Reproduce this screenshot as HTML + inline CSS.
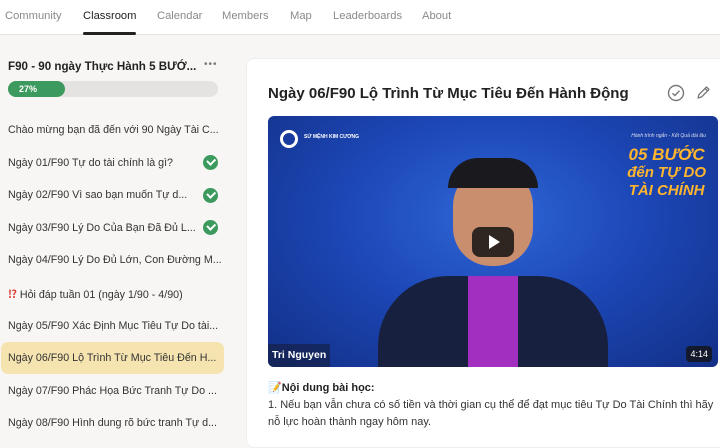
<!DOCTYPE html>
<html><head><meta charset="utf-8"><style>
*{margin:0;padding:0;box-sizing:border-box}
body{width:720px;height:434px;overflow:hidden;background:#f7f6f4;font-family:"Liberation Sans","Noto Sans CJK SC",sans-serif;color:#2a2a2a;position:relative}
.nav{position:absolute;left:0;top:0;width:720px;height:35px;background:#fff;border-bottom:1px solid #e6e4e0}
.nav span{position:absolute;top:10px;font-size:11.2px;color:#8a8a8a}
.nav .act{color:#222}
.ul{position:absolute;left:83px;top:32px;width:53px;height:3px;background:#222;border-radius:2px}
.side div{position:absolute;left:8px;font-size:10.7px;color:#333;white-space:nowrap}
.chk{position:absolute;left:203px;width:15px;height:15px;border-radius:50%;background:#3c9a5f}
.chk:after{content:"";position:absolute;left:4px;top:3px;width:6px;height:3.5px;border-left:2px solid #fff;border-bottom:2px solid #fff;transform:rotate(-45deg)}
.card{position:absolute;left:246px;top:58px;width:480px;height:390px;background:#fff;border-radius:8px;border:1px solid #eee}
</style></head><body>
<div class="nav">
<span style="left:5px">Community</span>
<span class="act" style="left:83px">Classroom</span>
<span style="left:157px">Calendar</span>
<span style="left:222px">Members</span>
<span style="left:290px">Map</span>
<span style="left:333px">Leaderboards</span>
<span style="left:422px">About</span>
<div class="ul"></div>
</div>
<div style="position:absolute;left:8px;top:60px;font-size:11.6px;font-weight:bold;color:#222">F90 - 90 ngày Thực Hành 5 BƯỚ...</div>
<div style="position:absolute;left:204px;top:59px;font-size:10px;color:#777;letter-spacing:1px">•••</div>
<div style="position:absolute;left:8px;top:81px;width:210px;height:16px;background:#e4e3e1;border-radius:8px"></div>
<div style="position:absolute;left:8px;top:81px;width:57px;height:16px;background:#3d9a5e;border-radius:8px;color:#fff;font-size:9px;font-weight:bold;padding:3px 0 0 11px">27%</div>
<div style="position:absolute;left:1px;top:342px;width:223px;height:32px;background:#f6e4b0;border-radius:7px"></div>
<div class="side">
<div style="top:124px">Chào mừng bạn đã đến với 90 Ngày Tài C...</div>
<div style="top:157px">Ngày 01/F90 Tự do tài chính là gì?</div>
<div style="top:189px">Ngày 02/F90 Vì sao bạn muốn Tự d...</div>
<div style="top:222px">Ngày 03/F90 Lý Do Của Bạn Đã Đủ L...</div>
<div style="top:254px">Ngày 04/F90 Lý Do Đủ Lớn, Con Đường M...</div>
<div style="top:287px"><span style="color:#d9342b;font-weight:bold">⁉</span> Hỏi đáp tuần 01 (ngày 1/90 - 4/90)</div>
<div style="top:320px">Ngày 05/F90 Xác Định Mục Tiêu Tự Do tài...</div>
<div style="top:352px">Ngày 06/F90 Lộ Trình Từ Mục Tiêu Đến H...</div>
<div style="top:385px">Ngày 07/F90 Phác Họa Bức Tranh Tự Do ...</div>
<div style="top:417px">Ngày 08/F90 Hình dung rõ bức tranh Tự d...</div>
</div>
<div class="chk" style="top:155px"></div>
<div class="chk" style="top:188px"></div>
<div class="chk" style="top:220px"></div>
<div class="card"></div>
<div style="position:absolute;left:268px;top:85px;font-size:15px;font-weight:bold;color:#222">Ngày 06/F90 Lộ Trình Từ Mục Tiêu Đến Hành Động</div>
<svg style="position:absolute;left:667px;top:84px" width="18" height="18" viewBox="0 0 18 18"><circle cx="9" cy="9" r="7.5" fill="none" stroke="#777" stroke-width="1.4"/><path d="M5.5 9.2l2.4 2.3 4.6-4.8" fill="none" stroke="#777" stroke-width="1.4"/></svg>
<svg style="position:absolute;left:695px;top:85px" width="16" height="16" viewBox="0 0 16 16"><path d="M3 13l1-3.5L11.5 2 14 4.5 6.5 12z M10 3.5l2.5 2.5" fill="none" stroke="#777" stroke-width="1.3" stroke-linejoin="round"/></svg>
<div style="position:absolute;left:268px;top:116px;width:450px;height:251px;border-radius:6px;overflow:hidden;background:radial-gradient(ellipse at 50% 40%,#2f66d6 0%,#1d48b8 45%,#122f86 100%)">
 <div style="position:absolute;left:12px;top:14px;width:18px;height:18px;border-radius:50%;border:3px solid #fff"></div>
 <div style="position:absolute;left:36px;top:18px;font-size:5px;color:#fff;font-weight:bold">SỨ MỆNH KIM CƯƠNG</div>
 <div style="position:absolute;right:12px;top:17px;font-size:5px;color:#dde;font-style:italic">Hành trình ngắn - Kết Quả dài lâu</div>
 <div style="position:absolute;right:12px;top:30px;font-size:17px;color:#ffb52e;font-weight:bold;font-style:italic;text-align:center;line-height:17px">05 BƯỚC<br><span style="font-size:15px">đến TỰ DO</span><br><span style="font-size:15px">TÀI CHÍNH</span></div>
 <div style="position:absolute;left:185px;top:50px;width:80px;height:100px;border-radius:40px 40px 38px 38px;background:#c98e6e"></div>
 <div style="position:absolute;left:180px;top:42px;width:90px;height:30px;border-radius:45px 45px 0 0;background:#1a1a1e"></div>
 <div style="position:absolute;left:110px;top:160px;width:230px;height:100px;border-radius:70px 70px 0 0;background:#17203e"></div>
 <div style="position:absolute;left:200px;top:160px;width:50px;height:95px;background:#a22fc0"></div>
 <div style="position:absolute;left:204px;top:111px;width:42px;height:30px;border-radius:8px;background:rgba(20,20,20,.85)"></div>
 <div style="position:absolute;left:221px;top:119px;width:0;height:0;border-left:11px solid #fff;border-top:7px solid transparent;border-bottom:7px solid transparent"></div>
 <div style="position:absolute;left:0;top:228px;width:62px;height:23px;background:rgba(20,30,60,.6);color:#fff;font-size:10.5px;font-weight:bold;padding:5px 0 0 4px">Tri Nguyen</div>
 <div style="position:absolute;right:6px;top:230px;background:rgba(20,20,20,.8);color:#fff;font-size:9px;padding:3px 4px;border-radius:4px">4:14</div>
</div>
<div style="position:absolute;left:268px;top:381px;font-size:11px;font-weight:bold;color:#222">📝Nội dung bài học:</div>
<div style="position:absolute;left:268px;top:397px;font-size:11px;color:#333;line-height:17px;width:448px">1. Nếu bạn vẫn chưa có số tiền và thời gian cụ thể để đạt mục tiêu Tự Do Tài Chính thì hãy nỗ lực hoàn thành ngay hôm nay.</div>
</body></html>
